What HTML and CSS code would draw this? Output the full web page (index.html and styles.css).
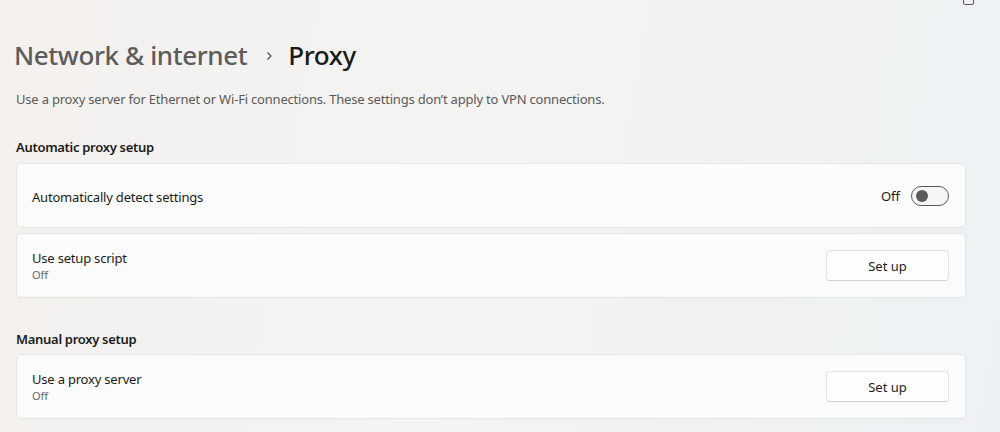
FILE: index.html
```html
<!doctype html>
<html>
<head>
<meta charset="UTF-8">
<title>Proxy</title>
	<link rel="stylesheet" href="styles.css">
</head>

<body>
	<div class="window-icon"></div>
	<div class="page">
		<h1 class="crumbs">
			<span class="crumb-parent">Network &amp; internet</span>
			<svg class="chevron" width="10" height="10" viewBox="0 0 10 10"><path d="M3.5 1.5 L7 5 L3.5 8.5" fill="none" stroke="#444" stroke-width="1.1"/></svg>
			<span class="crumb-current">Proxy</span>
		</h1>
		<p class="intro">Use a proxy server for Ethernet or Wi-Fi connections. These settings don’t apply to VPN connections.</p>

		<h2 class="section-title">Automatic proxy setup</h2>
		<div class="card single">
			<div class="card-text">
				<div class="card-label">Automatically detect settings</div>
			</div>
			<div class="toggle-wrap">
				<span class="toggle-state">Off</span>
				<span class="toggle"><span class="knob"></span></span>
			</div>
		</div>
		<div class="card">
			<div class="card-text">
				<div class="card-label">Use setup script</div>
				<div class="card-sub">Off</div>
			</div>
			<button class="btn">Set up</button>
		</div>

		<h2 class="section-title manual">Manual proxy setup</h2>
		<div class="card">
			<div class="card-text">
				<div class="card-label">Use a proxy server</div>
				<div class="card-sub">Off</div>
			</div>
			<button class="btn">Set up</button>
		</div>
	</div>
</body>
</html>
```

FILE: styles.css
```css
html, body {
	margin: 0;
	height: 100%;
}

body {
	font-family: "Segoe UI", "Noto Sans", "Open Sans", sans-serif;
	background: linear-gradient(100deg, #f4f1ee 0%, #f3f3f2 45%, #edf1f3 100%);
	color: #1b1b1b;
	overflow: hidden;
}

.window-icon {
	position: absolute;
	left: 963px;
	top: -6px;
	width: 9px;
	height: 9px;
	border: 1px solid #555;
	border-radius: 2px;
}

.page {
	padding: 36px 34px 0 16px;
}

.crumbs {
	display: flex;
	align-items: center;
	margin: 0 0 0 -2px;
	font-size: 26px;
	font-weight: 500;
	letter-spacing: -0.4px;
	line-height: 38px;
}

.crumb-parent {
	color: #5c5c5c;
}

.chevron {
	margin: 2px 14px 0 17px;
}

.crumb-current {
	color: #1a1a1a;
}

.intro {
	margin: 16px 0 0;
	font-size: 13px;
	letter-spacing: -0.2px;
	color: #5a5a5a;
	line-height: 18px;
}

.section-title {
	margin: 29px 0 6px;
	font-size: 13px;
	font-weight: 600;
	letter-spacing: -0.3px;
	line-height: 20px;
}

.section-title.manual {
	margin: 31px 0 5px;
}

.card {
	display: flex;
	align-items: center;
	justify-content: space-between;
	box-sizing: border-box;
	height: 65px;
	margin-bottom: 5px;
	padding: 0 16px 0 15px;
	background: #fbfbfb;
	border: 1px solid #e5e5e5;
	border-radius: 5px;
}

.card.single {
	padding-top: 3px;
}

.card-label {
	font-size: 13px;
	letter-spacing: -0.2px;
	line-height: 17px;
}

.card-sub {
	font-size: 11px;
	color: #666;
	line-height: 15px;
}

.toggle-wrap {
	display: flex;
	align-items: center;
	gap: 11px;
}

.single .toggle-wrap {
	margin-top: -3px;
}

.toggle-state {
	font-size: 13px;
}

.toggle {
	display: flex;
	align-items: center;
	box-sizing: border-box;
	width: 38px;
	height: 20px;
	padding: 0 4px;
	border: 1px solid #5b5b5b;
	border-radius: 10px;
	background: #f6f6f6;
}

.knob {
	width: 12px;
	height: 12px;
	border-radius: 50%;
	background: #5b5b5b;
}

.btn {
	width: 123px;
	height: 31px;
	font-family: inherit;
	font-size: 13px;
	color: #1b1b1b;
	background: #fefefe;
	border: 1px solid #e2e2e2;
	border-bottom-color: #cfcfcf;
	border-radius: 4px;
}
```
